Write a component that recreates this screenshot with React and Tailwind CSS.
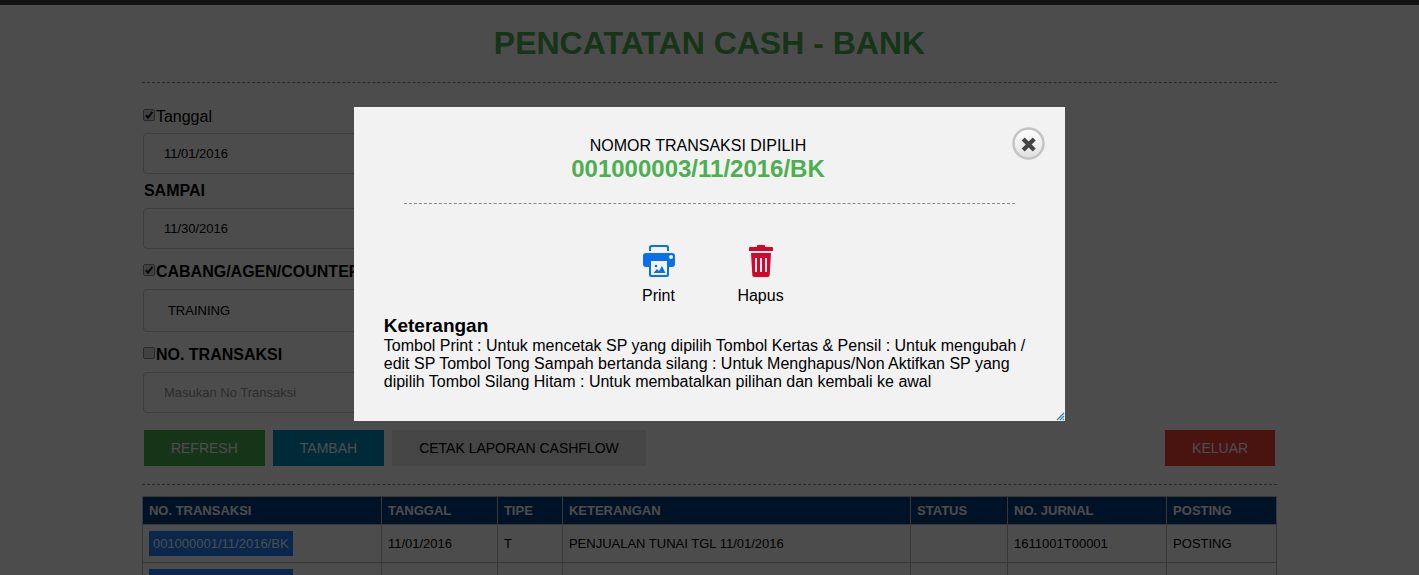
import { useState } from 'react';

const columns = [
  { label: 'NO. TRANSAKSI', width: 'w-[239px]' },
  { label: 'TANGGAL', width: 'w-[116px]' },
  { label: 'TIPE', width: 'w-[65px]' },
  { label: 'KETERANGAN', width: '' },
  { label: 'STATUS', width: 'w-[97px]' },
  { label: 'NO. JURNAL', width: 'w-[159px]' },
  { label: 'POSTING', width: 'w-[110px]' },
];

const rows = [
  { no: '001000001/11/2016/BK', tanggal: '11/01/2016', tipe: 'T', keterangan: 'PENJUALAN TUNAI TGL 11/01/2016', status: '', jurnal: '1611001T00001', posting: 'POSTING' },
  { no: '001000002/11/2016/BK', tanggal: '11/01/2016', tipe: 'T', keterangan: 'PENJUALAN TUNAI TGL 11/01/2016', status: '', jurnal: '1611001T00002', posting: 'POSTING' },
];

const field = 'block w-1/2 rounded border border-[#cccccc] bg-white px-5 text-[13px] text-black placeholder:text-[#999999]';
const cell = 'border border-[#bbbbbb] px-1.5';

function Check({ id, defaultChecked }) {
  return (
    <span className="relative -mt-1 inline-flex size-3">
      <input id={id} type="checkbox" defaultChecked={defaultChecked} className="peer size-3 appearance-none rounded-xs border border-[#8a8a8a] bg-[#dedede]" />
      <svg viewBox="0 0 12 12" className="pointer-events-none absolute inset-0 hidden size-3 peer-checked:block" aria-hidden="true">
        <path d="M3 6.2 5 8.6 9.4 2.8" fill="none" stroke="#222" strokeWidth="2.2" />
      </svg>
    </span>
  );
}

function PrintIcon() {
  return (
    <svg width="32" height="32" viewBox="0 0 32 32" fill="#0a6fe8" aria-hidden="true">
      <path d="M6 6V2.5A2.5 2.5 0 0 1 8.5 0h15A2.5 2.5 0 0 1 26 2.5V6h-2V3a1 1 0 0 0-1-1H9a1 1 0 0 0-1 1v3z" />
      <path fillRule="evenodd" d="M3 8h26a3 3 0 0 1 3 3v8a3 3 0 0 1-3 3h-3v7.5a2.5 2.5 0 0 1-2.5 2.5h-15A2.5 2.5 0 0 1 6 29.5V22H3a3 3 0 0 1-3-3v-8a3 3 0 0 1 3-3zm5 8v13a1 1 0 0 0 1 1h14a1 1 0 0 0 1-1V16zM28 10a2 2 0 1 0 0 4 2 2 0 0 0 0-4z" />
      <circle cx="13" cy="21" r="1.3" />
      <path d="M10.5 28l3.500-4 2 2 3-5 3.500 7z" />
    </svg>
  );
}

function TrashIcon() {
  return (
    <svg width="24" height="32" viewBox="0 0 24 32" fill="#d4062a" aria-hidden="true">
      <path d="M8 1a1 1 0 0 1 1-1h6a1 1 0 0 1 1 1v1h7a1 1 0 0 1 1 1v3H0V3a1 1 0 0 1 1-1h7z" />
      <path fillRule="evenodd" d="M2 8h20l-1.3 22a2 2 0 0 1-2 2H5.3a2 2 0 0 1-2-2zm4 5v14h2V13zm5 0v14h2V13zm5 0v14h2V13z" />
    </svg>
  );
}

function CloseIcon() {
  return (
    <svg width="33" height="33" viewBox="0 0 33 33" aria-hidden="true">
      <defs>
        <linearGradient id="closeFace" x1="0" y1="0" x2="0" y2="1">
          <stop offset="0%" stopColor="#ffffff" />
          <stop offset="100%" stopColor="#dfdfdf" />
        </linearGradient>
      </defs>
      <circle cx="16.5" cy="16.5" r="15" fill="url(#closeFace)" stroke="#c4c4c4" strokeWidth="2.5" />
      <path d="M11.2 12l11 11M22.200 12l-11 11" stroke="#444444" strokeWidth="4.2" />
    </svg>
  );
}

function TransactionDialog({ onClose }) {
  return (
    <div className="fixed inset-0 bg-black/70">
      <div role="dialog" aria-modal="true" aria-labelledby="dialog-title" className="relative mx-auto mt-[107px] w-[calc(50%+2px)] bg-[#f2f2f2] pt-5 pb-[30px]">
        <div className="flex items-start pr-5 pl-[30px]">
          <h2 id="dialog-title" className="flex-1 pt-2 text-center text-base leading-[22px]">
            NOMOR TRANSAKSI DIPILIH
            <span className="block text-2xl leading-6 font-bold text-[#4caf50]">001000003/11/2016/BK</span>
          </h2>
          <button type="button" onClick={onClose} aria-label="Tutup" className="size-[33px]">
            <CloseIcon />
          </button>
        </div>
        <hr className="mx-[50px] mt-[22px] border-dashed border-[#8c8b8b]" />
        <div className="mt-[41px] flex justify-center gap-[54px] text-base leading-[22px]">
          <button type="button" className="flex w-12 flex-col items-center gap-2">
            <PrintIcon />
            Print
          </button>
          <button type="button" className="flex w-12 flex-col items-center gap-2">
            <TrashIcon />
            Hapus
          </button>
        </div>
        <div className="mt-2 px-[30px]">
          <h3 className="text-[19px] leading-[22px] font-bold">Keterangan</h3>
          <p className="text-base leading-[18px]">
            Tombol Print : Untuk mencetak SP yang dipilih Tombol Kertas &amp; Pensil : Untuk mengubah / edit SP Tombol Tong Sampah bertanda silang : Untuk Menghapus/Non Aktifkan SP yang dipilih Tombol Silang Hitam : Untuk membatalkan pilihan dan kembali ke awal
          </p>
        </div>
        <svg className="absolute right-0 bottom-0" width="9" height="9" viewBox="0 0 9 9" aria-hidden="true">
          <path d="M1 8 8 1M4 8l4-4M7 8l1-1" stroke="#2f7fb5" strokeWidth="1.2" />
        </svg>
      </div>
    </div>
  );
}

export default function App() {
  const [open, setOpen] = useState(true);

  return (
    <div className="h-screen overflow-hidden border-t-5 border-[#404040] bg-white font-['Liberation_Sans',Arial,sans-serif] text-black">
      <main className="mx-auto w-4/5">
        <h1 className="pt-[18px] text-center text-[32px] leading-10 font-bold text-[#4caf50]">PENCATATAN CASH - BANK</h1>
        <hr className="mt-[19px] border-dashed border-[#8c8b8b]" />

        <form className="mt-6 text-base leading-5" onSubmit={(e) => e.preventDefault()}>
          <div className="flex items-center gap-px px-px">
            <Check id="use-date" defaultChecked />
            <label htmlFor="use-date">Tanggal</label>
          </div>
          <div className="mt-1.5 px-px">
            <input type="text" aria-label="Tanggal awal" defaultValue="11/01/2016" className={`${field} h-[41px]`} />
          </div>
          <label htmlFor="date-to" className="mt-[7px] block px-0.5 font-bold">SAMPAI</label>
          <div className="mt-[7px] px-px">
            <input id="date-to" type="text" defaultValue="11/30/2016" className={`${field} h-[41px]`} />
          </div>
          <div className="mt-[13px] flex items-center gap-px px-px font-bold">
            <Check id="use-branch" defaultChecked />
            <label htmlFor="use-branch">CABANG/AGEN/COUNTER</label>
          </div>
          <div className="mt-[7px] px-px">
            <select aria-label="Cabang" className={`${field} h-[43px] appearance-none pl-6`}>
              <option>TRAINING</option>
            </select>
          </div>
          <div className="mt-[13px] flex items-center gap-px px-px font-bold">
            <Check id="use-number" />
            <label htmlFor="use-number">NO. TRANSAKSI</label>
          </div>
          <div className="mt-[7px] px-px">
            <input type="text" aria-label="No transaksi" placeholder="Masukan No Transaksi" className={`${field} h-[41px]`} />
          </div>

          <div className="mt-[17px] flex gap-2 px-0.5 text-sm">
            <button type="submit" className="h-9 bg-[#4caf50] px-[27px] text-white">REFRESH</button>
            <button type="button" className="h-9 bg-[#008cba] px-[27px] text-white">TAMBAH</button>
            <button type="button" className="h-9 bg-[#e7e7e7] px-[27px]">CETAK LAPORAN CASHFLOW</button>
            <button type="button" className="ml-auto h-9 bg-[#f44336] px-[27px] text-white">KELUAR</button>
          </div>
        </form>

        <hr className="mt-[18px] border-dashed border-[#8c8b8b]" />

        <table className="mt-[11px] w-full table-fixed border-collapse text-left text-[13px] leading-none">
          <thead>
            <tr className="h-7 bg-[#003f7f] text-white">
              {columns.map((c) => (
                <th key={c.label} className={`${cell} font-bold ${c.width}`}>{c.label}</th>
              ))}
            </tr>
          </thead>
          <tbody>
            {rows.map((r) => (
              <tr key={r.no} className="h-[38px]">
                <td className={cell}>
                  <button type="button" onClick={() => setOpen(true)} className="block h-[25px] bg-[#1e80ff] px-1 text-white">{r.no}</button>
                </td>
                <td className={cell}>{r.tanggal}</td>
                <td className={cell}>{r.tipe}</td>
                <td className={cell}>{r.keterangan}</td>
                <td className={cell}>{r.status}</td>
                <td className={cell}>{r.jurnal}</td>
                <td className={cell}>{r.posting}</td>
              </tr>
            ))}
          </tbody>
        </table>
      </main>

      {open && <TransactionDialog onClose={() => setOpen(false)} />}
    </div>
  );
}
